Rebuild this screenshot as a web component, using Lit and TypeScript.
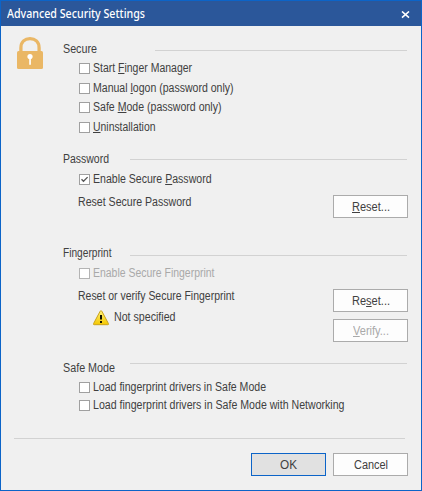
import { LitElement, html, css, svg, nothing } from "lit";
import { customElement, property } from "lit/decorators.js";

const measure = document.createElement("canvas").getContext("2d")!;

/** A label condensed to a given width; "_" precedes the access key letter. */
@customElement("ui-label")
class UiLabel extends LitElement {
  @property() text = "";
  @property({ type: Number }) width = 0;
  @property() font = '12px "Liberation Sans"';
  static styles = css`
    :host { display: block; white-space: pre; }
    .text { display: block; transform-origin: 0 0; }
    .key { text-decoration: underline; text-decoration-thickness: 1px; text-underline-offset: 1px; text-decoration-skip-ink: none; }
  `;
  render() {
    const i = this.text.indexOf("_");
    const plain = this.text.replace("_", "");
    measure.font = this.font;
    const scale = this.width / measure.measureText(plain).width;
    return html`<div style="width:${this.width}px"><span class="text" style="transform:scaleX(${scale.toFixed(4)})">${i < 0
      ? plain
      : html`${plain.slice(0, i)}<span class="key">${plain[i]}</span>${plain.slice(i + 1)}`}</span></div>`;
  }
}

@customElement("ui-check")
class UiCheck extends LitElement {
  @property() text = "";
  @property({ type: Number }) width = 0;
  @property({ type: Boolean }) checked = false;
  @property({ type: Boolean, reflect: true }) disabled = false;
  static styles = css`
    :host { display: flex; height: 14px; gap: 2.5px; }
    :host([disabled]) { color: #a9a9a9; }
    .box { box-sizing: border-box; width: 11px; height: 11px; margin-top: 2px; border: 1px solid #a0a0a0; background: #fff; flex: none; }
    :host([disabled]) .box { border-color: #b4b4b4; }
    svg { display: block; }
  `;
  render() {
    return html`<div class="box">${this.checked
        ? html`<svg width="9" height="9" viewBox="0 0 9 9">${svg`<path d="M1.5 4.2 3.5 6.3 7.6 2.1" fill="none" stroke="#555" stroke-width="1.3"/>`}</svg>`
        : nothing}</div>
      <ui-label .text=${this.text} .width=${this.width}></ui-label>`;
  }
}

@customElement("ui-button")
class UiButton extends LitElement {
  @property() text = "";
  @property({ type: Number }) width = 0;
  @property({ type: Boolean, reflect: true }) disabled = false;
  @property({ type: Boolean, reflect: true }) primary = false;
  static styles = css`
    :host { display: flex; box-sizing: border-box; width: 75px; height: 23px; flex: none; justify-content: center; padding: 4px 0 0 0; border: 1px solid #ababab; background: #fdfdfd; }
    :host([disabled]) { color: #a9a9a9; }
    :host([primary]) { border-color: #0c64c8; background: #e1e1e1; }
  `;
  render() {
    return html`<ui-label .text=${this.text} .width=${this.width}></ui-label>`;
  }
}

@customElement("app-root")
class AppRoot extends LitElement {
  static styles = css`
    :host { display: block; box-sizing: border-box; width: 422px; height: 491px; border: 1px solid #0c64c8; background: #f0f0f0; color: #404040; font: 12px/14px "Liberation Sans", sans-serif; overflow: hidden; }
    .title { display: flex; justify-content: space-between; height: 25px; background: #2b579a; color: #fff; padding: 0 11px 0 6px; }
    .title ui-label { font: 500 12px/16px "Noto Sans", sans-serif; padding-top: 5px; }
    .close { margin-top: 10px; }
    .main { display: flex; height: 411px; }
    .side { width: 61px; padding: 11px 0 0 16px; box-sizing: border-box; flex: none; }
    .side svg { display: block; }
    .content { width: 346px; }
    .head { display: flex; justify-content: space-between; height: 14px; padding-left: 0.5px; }
    .rule { height: 1px; background: #d2d2d2; width: 277px; margin: 7px 1px 0 0; }
    .secure { padding-top: 16px; height: 110px; box-sizing: border-box; }
    .secure .rule { width: 252px; margin: 8px 1px 0 0; }
    .password { height: 110px; padding-top: 16px; box-sizing: border-box; }
    .finger { height: 115px; box-sizing: border-box; }
    .finger .rule { margin-top: 9px; }
    .safe .rule { margin-top: 2px; }
    .list { display: flex; flex-direction: column; padding-left: 17px; }
    .secure .list { padding-top: 5px; gap: 6px; }
    .secure .list ui-check:nth-child(3) { margin-top: -1px; }
    .password .list { padding-top: 6px; }
    .finger .list { padding-top: 6px; }
    .safe .list { padding-top: 5px; gap: 4px; }
    .row { display: flex; justify-content: space-between; margin-left: 16px; }
    .password .row { margin-top: 9px; }
    .finger .row { margin-top: 9px; }
    .status { display: flex; gap: 4px; margin: 7px 0 0 15px; }
    .status svg { display: block; }
    .buttons { display: flex; flex-direction: column; gap: 7px; }
    .footer { width: 407px; display: flex; flex-direction: column; align-items: flex-end; gap: 14px; margin-top: 1px; }
    .footer .rule { width: 391px; margin: 0 3px 0 0; }
    .actions { display: flex; gap: 7px; }
  `;
  render() {
    return html`
      <div class="title">
        <ui-label text="Advanced Security Settings" .width=${138} font='500 12px "Noto Sans"'></ui-label>
        <svg class="close" width="9" height="8" viewBox="0 0 9 8"><path d="M1 .5 8 6.7M8 .5 1 6.7" stroke="#fff" stroke-width="1.6"/></svg>
      </div>
      <div class="main">
        <div class="side">
          <svg width="27" height="33" viewBox="0 0 27 33">
            <path d="M3.9 15V11C3.9 4.8 8 1.7 13 1.7S22.1 4.8 22.1 11V15" fill="none" stroke="#eab765" stroke-width="3.3"/>
            <rect y="14" width="26" height="18" rx="1.5" fill="#eab765"/>
            <circle cx="13" cy="19.5" r="2.6" fill="#fff"/>
            <path d="M12.2 20h1.7v7.8h-1.7z" fill="#fff"/>
          </svg>
        </div>
        <div class="content">
          <section class="secure">
            <div class="head"><ui-label text="Secure" .width=${34}></ui-label><div class="rule"></div></div>
            <div class="list">
              <ui-check text="Start _Finger Manager" .width=${99}></ui-check>
              <ui-check text="Manual _logon (password only)" .width=${140.5}></ui-check>
              <ui-check text="Safe _Mode (password only)" .width=${128.5}></ui-check>
              <ui-check text="_Uninstallation" .width=${62.5}></ui-check>
            </div>
          </section>
          <section class="password">
            <div class="head"><ui-label text="Password" .width=${46}></ui-label><div class="rule"></div></div>
            <div class="list"><ui-check checked text="Enable Secure _Password" .width=${118.5}></ui-check></div>
            <div class="row"><ui-label text="Reset Secure Password" .width=${113.5}></ui-label><ui-button text="_Reset..." .width=${38}></ui-button></div>
          </section>
          <section class="finger">
            <div class="head"><ui-label text="Fingerprint" .width=${48.5}></ui-label><div class="rule"></div></div>
            <div class="list"><ui-check disabled text="Enable Secure Fingerprint" .width=${121.5}></ui-check></div>
            <div class="row">
              <div>
                <ui-label text="Reset or verify Secure Fingerprint" .width=${156.5}></ui-label>
                <div class="status">
                  <svg width="17" height="16" viewBox="0 0 17 16">
                    <defs><linearGradient id="w" x2="0" y2="1"><stop stop-color="#fff078"/><stop offset="1" stop-color="#f5c800"/></linearGradient></defs>
                    <path d="M8 .7Q8.6.7 9 1.5L15.4 13.5Q16 14.7 14.8 14.7H1.2Q0 14.7.6 13.5L7 1.5Q7.4.7 8 .7Z" fill="url(#w)" stroke="#c9a21c" stroke-width="1"/>
                    <path d="M7 5h2v4.5H7zM7 11h2v2H7z" fill="#141400"/>
                  </svg>
                  <ui-label text="Not specified" .width=${61.5}></ui-label>
                </div>
              </div>
              <div class="buttons">
                <ui-button text="Re_set..." .width=${38}></ui-button>
                <ui-button disabled text="_Verify..." .width=${36}></ui-button>
              </div>
            </div>
          </section>
          <section class="safe">
            <div class="head"><ui-label text="Safe Mode" .width=${52}></ui-label><div class="rule"></div></div>
            <div class="list">
              <ui-check text="Load fingerprint drivers in Safe Mode" .width=${173}></ui-check>
              <ui-check text="Load fingerprint drivers in Safe Mode with Networking" .width=${251.5}></ui-check>
            </div>
          </section>
        </div>
      </div>
      <div class="footer">
        <div class="rule"></div>
        <div class="actions"><ui-button primary text="OK" .width=${17}></ui-button><ui-button text="Cancel" .width=${34}></ui-button></div>
      </div>`;
  }
}
